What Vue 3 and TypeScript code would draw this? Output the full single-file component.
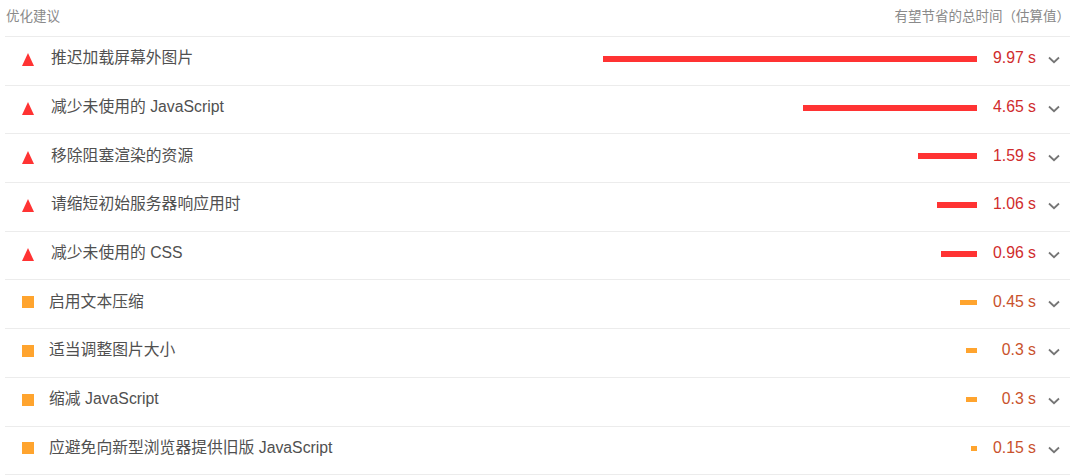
<script setup lang="ts">
interface Opportunity {
  title: string
  width: number
  value: string
  level: 'fail' | 'average'
}

const rows: Opportunity[] = [
  { title: '推迟加载屏幕外图片', width: 374, value: '9.97 s', level: 'fail' },
  { title: '减少未使用的 JavaScript', width: 174, value: '4.65 s', level: 'fail' },
  { title: '移除阻塞渲染的资源', width: 59, value: '1.59 s', level: 'fail' },
  { title: '请缩短初始服务器响应用时', width: 40, value: '1.06 s', level: 'fail' },
  { title: '减少未使用的 CSS', width: 36, value: '0.96 s', level: 'fail' },
  { title: '启用文本压缩', width: 17, value: '0.45 s', level: 'average' },
  { title: '适当调整图片大小', width: 11, value: '0.3 s', level: 'average' },
  { title: '缩减 JavaScript', width: 11, value: '0.3 s', level: 'average' },
  { title: '应避免向新型浏览器提供旧版 JavaScript', width: 6, value: '0.15 s', level: 'average' },
]
</script>

<template>
  <div class="page">
    <div class="head">
      <span>优化建议</span>
      <span>有望节省的总时间（估算值）</span>
    </div>
    <div v-for="row in rows" :key="row.title" class="row" :class="row.level">
      <span class="icon"></span>
      <span class="title">{{ row.title }}</span>
      <span class="bar" :style="{ width: row.width + 'px' }"></span>
      <span class="value">{{ row.value }}</span>
      <svg class="chevron" width="12" height="8" viewBox="0 0 12 8">
        <path d="M1 1.5 L6 6.2 L11 1.5" fill="none" stroke="#757575" stroke-width="1.8" />
      </svg>
    </div>
  </div>
</template>

<style>
body {
  background: #fff;
}
</style>

<style scoped>
.page {
  width: 1065px;
  height: 476px;
  margin-left: 5px;
  overflow: hidden;
  font-family: "Liberation Sans", "Noto Sans CJK SC", sans-serif;
}
.head {
  display: flex;
  justify-content: space-between;
  height: 37px;
  padding: 9px 0 0 1px;
  box-sizing: border-box;
  font-size: 13.5px;
  line-height: 16px;
  color: #8a8a8a;
  text-spacing-trim: space-all;
  border-bottom: 1px solid #ececec;
}
.row {
  display: flex;
  align-items: center;
  height: 48.7px;
  padding-bottom: 4px;
  box-sizing: border-box;
  font-size: 15.8px;
  border-bottom: 1px solid #ececec;
}
.icon {
  flex: none;
  margin-left: 17px;
}
.fail .icon {
  width: 0;
  height: 0;
  border-left: 6.5px solid transparent;
  border-right: 6.5px solid transparent;
  border-bottom: 13px solid #ff3333;
  margin-top: 2px;
  margin-right: 17px;
}
.average .icon {
  width: 12px;
  height: 12px;
  background: #ffa42e;
  margin-right: 15px;
}
.title {
  flex: 1;
  color: #505050;
  margin-top: -4px;
}
.bar {
  flex: none;
  height: 6px;
}
.fail .bar {
  background: #ff3333;
}
.average .bar {
  height: 5px;
  background: #ffa42e;
}
.value {
  flex: none;
  width: 59px;
  text-align: right;
  margin-top: -1px;
}
.fail .value {
  color: #d02c2c;
}
.average .value {
  color: #c9522c;
}
.chevron {
  flex: none;
  margin-left: 12px;
  margin-right: 10px;
  margin-top: 3px;
}
</style>
